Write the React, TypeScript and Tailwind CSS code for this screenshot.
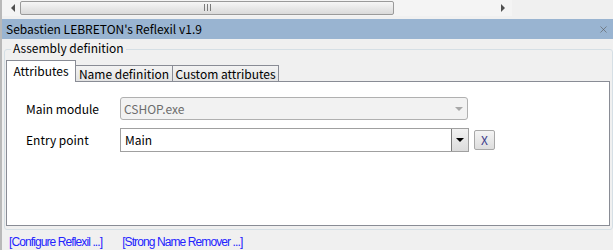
import { X } from 'lucide-react';

const ui = { fontFamily: '"Noto Sans CJK KR", "Noto Sans", sans-serif' };
const link = { fontFamily: '"Liberation Sans", Arial, sans-serif' };

function ScrollBar() {
  return (
    <div className="h-[19px] flex items-start">
      <div className="w-[510px] h-[16px] bg-[#f4f4f4] flex items-center pl-[3px]">
        <div className="w-[15px] flex justify-center">
          <div className="w-0 h-0 border-y-[4px] border-y-transparent border-r-[4px] border-r-[#505050]" />
        </div>
        <div className="w-[374px] h-[14px] -mt-[1px] rounded-[2px] border border-[#9a9a9a] bg-gradient-to-b from-[#f6f6f6] to-[#dadada] flex items-center justify-center">
          <div className="w-[1px] h-[7px] bg-[#7a7a7a]" />
          <div className="w-[1px] h-[7px] bg-[#7a7a7a] ml-[2px]" />
          <div className="w-[1px] h-[7px] bg-[#7a7a7a] ml-[2px]" />
        </div>
        <div className="flex-1" />
        <div className="w-[15px] flex justify-center mr-[2px]">
          <div className="w-0 h-0 border-y-[4px] border-y-transparent border-l-[4px] border-l-[#505050]" />
        </div>
      </div>
    </div>
  );
}

function Combo({ value, disabled }: { value: string; disabled?: boolean }) {
  if (disabled) {
    return (
      <div className="w-[348px] h-[23px] shrink-0 rounded-[3px] border border-[#b0b0b0] bg-[#f2f2f2] flex items-center pl-[3px] text-[#6d6d6d]">
        <span className="flex-1">{value}</span>
        <div className="w-[17px] flex justify-center">
          <div className="w-0 h-0 border-x-[4px] border-x-transparent border-t-[4px] border-t-[#a8a8a8]" />
        </div>
      </div>
    );
  }
  return (
    <div className="w-[349px] h-[24px] shrink-0 border border-[#a0a0a0] bg-white flex items-center pl-[4px] text-black">
      <span className="flex-1">{value}</span>
      <div className="w-[17px] h-[22px] border-l border-[#7a7a7a] bg-gradient-to-b from-[#f2f2f2] to-[#dcdcdc] flex items-center justify-center">
        <div className="w-0 h-0 border-x-[4px] border-x-transparent border-t-[4px] border-t-black" />
      </div>
    </div>
  );
}

export default function App() {
  return (
    <div
      className="w-[613px] h-[250px] bg-[#f0f0f0] border-l-2 border-[#b9b9b9] overflow-hidden text-[12px] leading-none"
      style={ui}
    >
      <ScrollBar />
      <div className="h-[20px] bg-[#99b4d1] flex items-center pl-[4px] pr-[4px] text-black">
        <span className="flex-1">Sebastien LEBRETON's Reflexil v1.9</span>
        <X className="w-[11px] h-[11px] text-[#5a5a5a]" strokeWidth={1.3} />
      </div>

      <div className="relative mt-[10px] ml-[2px] w-[609px] h-[181px] rounded-[3px] border border-[#d5dfe5] pt-[10px] pl-[1px] pr-[2px]">
        <span className="absolute -top-[8px] left-[6px] bg-[#f0f0f0] px-[2px] text-black">Assembly definition</span>

        <div className="flex items-end h-[21px] relative z-10">
          <div className="h-[22px] w-[70px] bg-white border border-b-0 border-[#898c95] flex items-center justify-center -mb-px pb-[2px]">
            Attributes
          </div>
          <div className="h-[16px] w-[97px] bg-gradient-to-b from-[#f3f3f3] to-[#e3e3e3] border border-l-0 border-b-0 border-[#898c95] flex items-center justify-center">
            Name definition
          </div>
          <div className="h-[16px] w-[106px] bg-gradient-to-b from-[#f3f3f3] to-[#e3e3e3] border border-l-0 border-b-0 border-[#898c95] flex items-center justify-center">
            Custom attributes
          </div>
        </div>
        <div className="h-[145px] bg-white border border-[#898c95] pt-[15px] pl-[19px] flex flex-col gap-[8px]">
          <div className="flex items-center h-[23px]">
            <span className="w-[94px]">Main module</span>
            <Combo value="CSHOP.exe" disabled />
          </div>
          <div className="flex items-center h-[24px]">
            <span className="w-[94px]">Entry point</span>
            <Combo value="Main" />
            <div className="ml-[5px] w-[21px] h-[20px] rounded-[2px] border border-[#a8a8a8] bg-gradient-to-b from-[#f4f4f4] to-[#dddddd] flex items-center justify-center text-[#3a3a8a] text-[12px]">
              X
            </div>
          </div>
        </div>
      </div>

      <div className="mt-[6px] pl-[7px] flex gap-[20px] text-[#2323ff] text-[12px] tracking-[-0.9px]" style={link}>
        <span>[Configure Reflexil ...]</span>
        <span>[Strong Name Remover ...]</span>
      </div>
    </div>
  );
}
